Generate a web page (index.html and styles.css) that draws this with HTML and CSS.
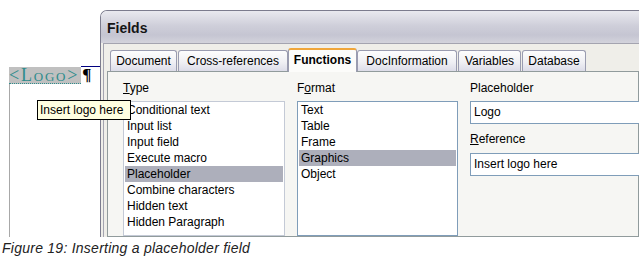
FILE: index.html
```html
<!DOCTYPE html>
<html lang="en">
<head>
  <meta charset="UTF-8" />
  <title>Inserting a placeholder field</title>
  <link rel="stylesheet" href="styles.css">
</head>
<body>
  <div class="shot">
    <div class="doc">
      <div class="doc-row">
        <span class="field">&lt;Logo&gt;</span>
        <div class="tail"><span class="pilcrow">¶</span></div>
      </div>
      <div class="doc-margin"></div>
    </div>

    <div class="dialog">
      <div class="titlebar">Fields</div>
      <div class="dialog-body">
        <div class="frame">
          <div class="tabs">
            <div class="tab tab-doc">Document</div>
            <div class="tab tab-cross">Cross-references</div>
            <div class="tab tab-func active">Functions</div>
            <div class="tab tab-info">DocInformation</div>
            <div class="tab tab-var">Variables</div>
            <div class="tab tab-db">Database</div>
          </div>

          <div class="panel">
            <div class="col col-type">
              <div class="label"><u>T</u>ype</div>
              <ul class="list list-type">
                <li>Conditional text</li>
                <li>Input list</li>
                <li>Input field</li>
                <li>Execute macro</li>
                <li class="selected">Placeholder</li>
                <li>Combine characters</li>
                <li>Hidden text</li>
                <li>Hidden Paragraph</li>
              </ul>
            </div>

            <div class="col col-format">
              <div class="label">F<u>o</u>rmat</div>
              <ul class="list">
                <li>Text</li>
                <li>Table</li>
                <li>Frame</li>
                <li class="selected">Graphics</li>
                <li>Object</li>
              </ul>
            </div>

            <div class="col col-fields">
              <div class="label">Placeholder</div>
              <div class="input">Logo</div>
              <div class="label label-gap"><u>R</u>eference</div>
              <div class="input">Insert logo here</div>
            </div>
          </div>
        </div>
      </div>
    </div>

    <div class="tooltip">Insert logo here</div>
  </div>

  <p class="caption">Figure 19: Inserting a placeholder field</p>
</body>
</html>
```

FILE: styles.css
```css
body {
  margin: 0;
  background: #fff;
  font-family: 'Liberation Sans', Arial, sans-serif;
  font-size: 12px;
  color: #000;
}

.shot {
  position: relative;
  display: flex;
  height: 237px;
  overflow: hidden;
}

/* document side */
.doc {
  width: 100px;
  flex-shrink: 0;
  display: flex;
  flex-direction: column;
  padding-top: 66px;
  box-sizing: border-box;
}

.doc-row {
  display: flex;
  align-items: flex-start;
}

.field {
  margin: 1px 0 0 9px;
  padding-right: 2px;
  height: 16px;
  line-height: 16px;
  background: #c0c0c0;
  border-bottom: 1px dotted #2e8c8c;
  font-family: 'Liberation Serif', serif;
  font-size: 18px;
  font-variant: small-caps;
  letter-spacing: 1.8px;
  color: #2e8c8c;
  white-space: nowrap;
}

.tail {
  flex: 1;
  border-top: 1px solid #000080;
}

.pilcrow {
  display: block;
  height: 16px;
  line-height: 16px;
  padding-left: 1px;
  font-family: 'Liberation Serif', serif;
  font-size: 17px;
  font-weight: bold;
}

.doc-margin {
  flex: 1;
  margin-left: 9px;
  border-left: 1px solid #a8a8a8;
}

.tooltip {
  position: absolute;
  left: 37px;
  top: 100px;
  height: 18px;
  line-height: 18px;
  padding: 0 7px 0 2px;
  background: #ffffe1;
  border: 1px solid #000;
  white-space: nowrap;
  z-index: 2;
}

/* dialog */
.dialog {
  flex: 1;
  margin-top: 10px;
  display: flex;
  flex-direction: column;
  border-top: 1px solid #7c7c8e;
  border-left: 1px solid #7c7c8e;
  border-top-left-radius: 7px;
  overflow: hidden;
  min-width: 0;
}

.titlebar {
  height: 32px;
  line-height: 34px;
  padding-left: 6px;
  flex-shrink: 0;
  font-size: 14px;
  font-weight: bold;
  color: #151515;
  background: linear-gradient(#e9e9ef, #cfcfda 45%, #c5c5d2 75%, #d3d3dc);
}

.dialog-body {
  flex: 1;
  display: flex;
  padding-left: 2px;
  background: #efeee9;
}

.frame {
  flex: 1;
  display: flex;
  flex-direction: column;
  padding: 6px 0 0 3px;
  border-top: 1px solid #a4a4b0;
  border-left: 1px solid #a4a4b0;
  min-width: 0;
}

.tabs {
  display: flex;
  align-items: flex-end;
  gap: 1px;
  margin-left: 3px;
  height: 21px;
  white-space: nowrap;
}

.tab {
  box-sizing: border-box;
  height: 21px;
  line-height: 20px;
  text-align: center;
  border: 1px solid #9a9cb0;
  border-bottom: none;
  border-radius: 3px 3px 0 0;
  background: linear-gradient(#fdfdfd, #f0f0f4 55%, #dcdce8);
}

.tab-doc { width: 67px; }
.tab-cross { width: 110px; }
.tab-func { width: 69px; }
.tab-info { width: 100px; }
.tab-var { width: 63px; }
.tab-db { width: 64px; }

.tab.active {
  position: relative;
  height: 24px;
  margin: 0 -1px -1px;
  line-height: 21px;
  font-weight: bold;
  background: #fcfcfa;
  border-top: 2px solid #f0a63a;
  z-index: 1;
}

.panel {
  flex: 1;
  display: flex;
  gap: 12px;
  padding: 8px 0 0 15px;
  border: 1px solid #919b9c;
  background: #f6f6f3;
}

.col {
  flex-shrink: 0;
  display: flex;
  flex-direction: column;
}

.col-type {
  width: 162px;
}

.col-format {
  width: 161px;
}

.col-fields {
  width: 220px;
}

.label {
  height: 16px;
  line-height: 16px;
  margin-bottom: 5px;
}

.label-gap {
  margin: 7px 0 6px;
}

.list {
  flex: 1;
  margin: 0;
  padding: 0;
  list-style: none;
  background: #fff;
  border: 1px solid #7f9db9;
}

.list-type {
  border-color: #c4cad6;
}

.list li {
  height: 16px;
  line-height: 16px;
  margin: 0 1px;
  padding: 0 2px;
  white-space: nowrap;
}

.list li.selected {
  background: #adafbb;
}

.input {
  height: 21px;
  line-height: 21px;
  padding-left: 3px;
  background: #fff;
  border: 1px solid #7f9db9;
  border-right: none;
}

.caption {
  margin: 2px 0 0;
  padding-left: 2px;
  font-size: 14px;
  line-height: 18px;
  font-style: italic;
  letter-spacing: 0.25px;
  color: #222;
}
```
